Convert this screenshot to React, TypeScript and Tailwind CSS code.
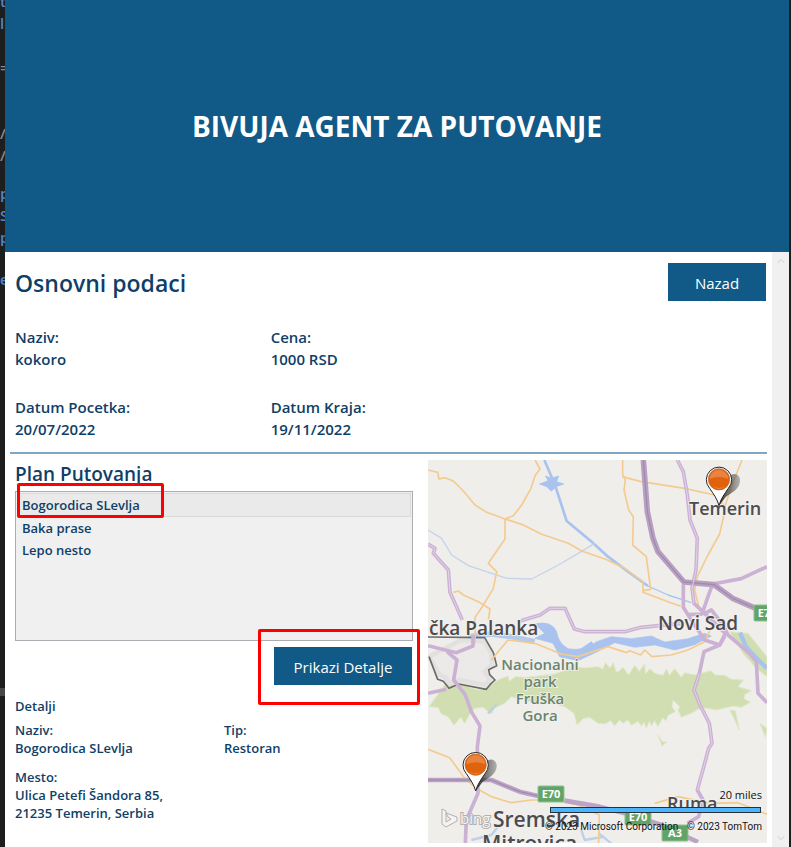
import { ChevronDown, ChevronUp } from "lucide-react";
import { useState } from "react";

const places = ["Bogorodica SLevlja", "Baka prase", "Lepo nesto"];

function Field({ label, value }: { label: string; value: string }) {
  return (
    <div className="px-[10px]">
      <dt>{label}</dt>
      <dd>{value}</dd>
    </div>
  );
}

function ActionButton({ children, className }: { children: string; className: string }) {
  return (
    <button
      type="button"
      className={`h-[38px] bg-[#115a87] pt-[2px] font-['Open_Sans','Noto_Sans',sans-serif] text-[15px] font-normal text-white ${className}`}
    >
      {children}
    </button>
  );
}

function Pin({ x, y }: { x: number; y: number }) {
  return (
    <g transform={`translate(${x} ${y})`}>
      <path d="M0 0C10-30 14-60 30-86C44-104 66-92 63-72C60-48 36-38 20-26Z" fill="url(#shade)" />
      <path
        d="M0 0C-5-20-16-34-28-52A38 38 0 1 1 28-52C16-34 5-20 0 0Z"
        fill="#fff"
        stroke="#222"
        strokeWidth="3"
      />
      <circle cy="-79" r="32" fill="#e0620c" stroke="#c4622a" strokeWidth="2" />
      <path d="M-28-80A28 28 0 0 1 28-80Q0-92-28-80Z" fill="#ea8240" />
      <path d="M-20-60Q0-46 20-60Q0-40-20-60Z" fill="#f08638" />
    </g>
  );
}

function Badge({ x, y, w, label }: { x: number; y: number; w: number; label: string }) {
  return (
    <g>
      <rect x={x} y={y} width={w} height="16" rx="1" fill="#62a468" stroke="#8fc193" />
      <text x={x + w / 2} y={y + 12} textAnchor="middle" fontSize="11" fontWeight="700" fill="#fff">
        {label}
      </text>
    </g>
  );
}

function RouteMap() {
  return (
    <svg
      className="h-[383px] w-full font-['Open_Sans','Noto_Sans',sans-serif] font-normal"
      viewBox="0 0 339 383"
      preserveAspectRatio="xMidYMid slice"
      role="img"
      aria-label="Mapa putovanja"
    >
      <defs>
        <linearGradient id="shade" x1="0" x2="1">
          <stop offset="0" stopColor="#222" stopOpacity="0.95" />
          <stop offset="1" stopColor="#666" stopOpacity="0.45" />
        </linearGradient>
      </defs>
      <rect width="339" height="383" fill="#f0eeeb" />
      <g transform="scale(0.33333)" fill="none" strokeLinejoin="round">
        {/* Fruška Gora forest */}
        <g fill="#d0deb1" stroke="#dee8c8" strokeWidth="3">
          <path d="M3 740L25 710L55 668L80 675L102 670L120 680L150 690L180 682L210 660L240 648L244 664L262 650L290 652L330 648L380 642L420 628L440 608L450 622L470 624L510 620L525 628L532 608L546 624L556 608L564 634L570 636L585 622L602 645L620 616L634 634L650 612L652 642L666 626L680 640L705 646L716 626L724 646L740 626L760 652L770 638L800 645L820 640L848 632L862 645L890 646L910 658L946 660L930 680L970 692L950 704L948 716L968 726L940 742L916 738L890 744L866 750L834 744L810 748L790 760L760 772L750 750L756 740L735 720L732 740L742 755L720 766L714 782L704 774L690 800L680 782L670 798L664 784L655 804L648 786L640 798L630 784L610 796L600 780L585 790L575 780L560 798L548 782L530 792L510 790L485 772L465 776L447 794L438 760L410 740L370 730L330 734L290 720L250 710L230 730L200 744L190 762L165 742L140 745L124 765L110 790L98 772L78 796L60 770L40 762L30 742Z" />
          <path d="M906 750L934 810L928 780L922 752ZM690 825L702 858L716 846L704 846ZM996 790L1012 832L1017 805Z" />
          <path d="M905 515L960 520L1017 590V650L985 625L945 580Z" />
        </g>
        {/* Danube and canals */}
        <g stroke="#a9c3ee">
          <path strokeWidth="8" d="M349 0L381 75L416 183L491 245L540 290L600 335L660 378" />
          <path strokeWidth="4" d="M660 378L720 405L790 428" />
          <path strokeWidth="4" stroke="#c4d3ea" d="M0 210L41 235L71 285L121 317L191 340L236 355L311 357L391 315L451 280L500 250" />
          <path fill="#a9c3ee" strokeWidth="2" d="M334 72L360 62L352 48L371 54L392 48L386 65L408 72L384 80L370 94L356 80Z" />
          <path strokeWidth="16" d="M120 530L190 522L250 530L320 545" stroke="#b4cae9" />
          <path fill="#a9c3ee" strokeWidth="2" d="M320 492Q370 480 386 515Q390 548 420 566Q470 575 506 545L550 530L610 536L670 528L710 546L780 536L830 520L850 528L800 554L740 570L680 555L620 562L560 548L508 575L450 602L395 590L376 550L320 535L350 520Z" />
          <path strokeWidth="15" d="M380 545L405 586L450 580L495 550" />
          <path strokeWidth="13" d="M936 518L954 560L985 594L1017 625" />
          <path strokeWidth="7" d="M206 734L180 760M130 1140L190 1125L210 1100M460 1110L470 1140L530 1130M512 1120L550 1150" stroke="#bdd0ea" />
        </g>
        {/* Town outlines */}
        <path fill="#eceae8" strokeWidth="14" stroke="#e2e1df" d="M3 590L100 540L170 545L190 580L192 614L170 635L186 660L170 675L95 660L62 672L56 655L35 645Z" />
        <path stroke="#6b6b6b" strokeWidth="5" d="M0 531L170 533L196 578L206 617L182 629L185 644L201 660L186 674L175 688L92 672L63 685L46 664L29 658L3 590" />
        {/* Local roads */}
        <g stroke="#f3cb90" strokeWidth="5">
          <path d="M0 30L29 37L33 57L51 53L76 63L106 93L141 135L176 157L231 177L281 193L341 223L421 250L461 273L531 297L590 325L645 365L645 397L720 425L758 439" />
          <path d="M321 0L336 27L321 47L309 85L281 135L256 167L231 177V237L181 310L206 335L196 385L166 435L141 473V550" />
          <path d="M76 397L91 393L106 405L151 425L186 447L181 480" />
          <path d="M584 0V42L592 60L588 90L602 150L616 170L614 255L655 290L668 388L645 392" />
          <path d="M582 50L640 65L770 85L860 105L880 125L892 145L875 222L840 285L808 350L800 390L812 440L830 465" />
          <path d="M942 0L910 80L890 142" />
          <path d="M190 600L240 540L320 550L400 582L450 590L540 560L595 578L605 572L638 585L650 570L672 590L730 585L780 570L830 545L860 480" />
          <path d="M0 868L65 893L110 955L145 985L190 1010L250 1028L310 1020L380 1020L450 1035L514 1065L512 1150" />
          <path d="M680 1030L750 1010L850 1030L930 1028L1017 1063" />
        </g>
        {/* Main roads */}
        <g stroke="#cbb1d4" strokeWidth="11">
          <path d="M0 252L21 265L16 280L61 330L66 397L103 480" />
          <path d="M276 483L336 465L366 445H411L439 507L471 515H590L640 502L760 490" />
          <path d="M748 0L766 35L778 105L786 180L808 235L804 330L792 385L798 430L830 460L850 450L885 495L900 525L962 578L985 605L990 700L1017 728" />
          <path d="M766 373V442L780 464L822 462L840 410L854 372L940 356L1017 320" />
          <path d="M890 530L875 555L828 575L814 640L798 690L816 735L844 790L852 850L842 865L826 925L808 990L825 1020L812 1070L778 1090" />
          <path d="M57 575L87 600L77 660L112 705L130 755L156 798L148 860L150 1000L115 1080L112 1149" />
          <path d="M0 700L55 688M0 557L85 578L135 558V525" />
          <path d="M780 464L830 540L875 555L892 520L830 460" />
          <path d="M0 960H190L275 995L340 1010M410 1022L514 1040L600 1062L700 1095L810 1146" strokeWidth="14" stroke="#bda4c7" />
          <path d="M646 0L658 155L675 235L690 275L768 366L858 374L914 415L985 446" strokeWidth="17" stroke="#b9a0c3" />
          <path d="M646 0L658 155L675 235L690 275L768 366L858 374L914 415L985 446M0 960H190L275 995L340 1010" strokeWidth="4" stroke="#9f8cac" />
        </g>
        <g stroke="#e3d3e8" strokeWidth="3">
          <path d="M0 252L21 265L16 280L61 330L66 397L103 480M276 483L336 465L366 445H411L439 507L471 515H590L640 502L760 490" />
          <path d="M748 0L766 35L778 105L786 180L808 235L804 330L792 385L798 430" />
          <path d="M814 640L798 690L816 735L844 790L852 850L842 865L826 925L808 990" />
        </g>
      </g>
      <g fill="#4c4c4e" stroke="#f3f1ef" strokeWidth="2" strokeOpacity="0.8" paintOrder="stroke" fontWeight="600" fontSize="19">
        <text x="1" y="175">čka Palanka</text>
        <text x="261" y="55" fontSize="18">Temerin</text>
        <text x="230" y="170">Novi Sad</text>
        <text x="65" y="367" fontSize="21">Sremska</text>
        <text x="54" y="391" fontSize="21">Mitrovica</text>
        <text x="239" y="350" fontSize="18">Ruma</text>
        <g fontSize="15" fill="#68856f" textAnchor="middle">
          <text x="112" y="210">Nacionalni</text>
          <text x="112" y="227">park</text>
          <text x="112" y="244">Fruška</text>
          <text x="112" y="261">Gora</text>
        </g>
      </g>
      <Badge x={326} y={145} w={26} label="E75" />
      <Badge x={110} y={326} w={26} label="E70" />
      <Badge x={197} y={349} w={26} label="E70" />
      <Badge x={234} y={365} w={26} label="A3" />
      <g transform="scale(0.33333)">
        <Pin x={873} y={137} />
        <Pin x={143} y={993} />
      </g>
      <g fill="#f4f3f1" stroke="#b3b1b0" strokeWidth="1">
        <path d="M14 349L18 351V362L23 359L20 357L18 353L29 357V361L18 367L14 364Z" />
        <text x="32" y="364" fontSize="15" fontWeight="400" paintOrder="stroke" strokeWidth="2">
          bing
        </text>
      </g>
      <rect x="122.5" y="347.5" width="210" height="5" fill="#4cb4fa" stroke="#26323b" />
      <g fill="#111">
        <text x="334" y="339" textAnchor="end" fontSize="11">20 miles</text>
        <g className="font-[Roboto,sans-serif]" fontSize="10">
          <text x="117" y="370">© 2023 Microsoft Corporation</text>
          <text x="334" y="370" textAnchor="end">© 2023 TomTom</text>
        </g>
      </g>
    </svg>
  );
}

function EditorEdge() {
  return (
    <div
      aria-hidden="true"
      className="flex w-[5px] shrink-0 flex-col overflow-hidden bg-[#1e1e1e] font-['Open_Sans',sans-serif] text-[15px] leading-[22px] text-[#4f86c6]"
    >
      <span className="-mt-[10px]">t</span>
      <span>l</span>
      <span className="mt-[22px] text-[#8a8a8a]">=</span>
      <span className="mt-[44px] text-[#8a8a8a]">/</span>
      <span className="text-[#8a8a8a]">/</span>
      <span className="mt-[16px]">p</span>
      <span>S</span>
      <span>p</span>
      <span className="mt-[20px]">e</span>
      <span className="mt-[398px] h-[8px] bg-[#484848]" />
    </div>
  );
}

export default function App() {
  const [selected, setSelected] = useState(0);

  return (
    <div className="flex min-h-screen bg-[#1e1e1e] font-['Open_Sans','Noto_Sans',sans-serif] font-semibold text-[#0f3f68]">
      <EditorEdge />
      <div className="flex min-w-0 flex-1 flex-col bg-white">
        <header className="flex h-[252px] items-center justify-center bg-[#115a87]">
          <h1 className="text-[28px] font-bold text-white">BIVUJA AGENT ZA PUTOVANJE</h1>
        </header>
        <div className="flex flex-1">
          <main className="min-w-0 flex-1">
            <div className="flex items-center justify-between pt-[11px] pr-[6px] pl-[10px]">
              <h2 className="pt-[2px] text-[23px] leading-8">Osnovni podaci</h2>
              <ActionButton className="w-[98px]">Nazad</ActionButton>
            </div>
            <dl className="mt-[25px] grid grid-cols-3 gap-y-[26px] text-[15px] leading-[22px]">
              <Field label="Naziv:" value="kokoro" />
              <Field label="Cena:" value="1000 RSD" />
              <div />
              <Field label="Datum Pocetka:" value="20/07/2022" />
              <Field label="Datum Kraja:" value="19/11/2022" />
            </dl>
            <hr className="mx-[5px] mt-[12px] border-t-2 border-[#7fa6c2]" />
            <div className="mx-[5px] mt-[6px] grid grid-cols-[418fr_339fr]">
              <section>
                <h3 className="h-[31px] pl-[5px] text-[19px] leading-[28px]">Plan Putovanja</h3>
                <ul className="mr-[15px] ml-[5px] h-[150px] border border-[#abadb3] bg-[#f0f0f0] p-px text-[13px]">
                  {places.map((place, i) => (
                    <li key={place} className="relative">
                      <button
                        type="button"
                        onClick={() => setSelected(i)}
                        className={`block w-full border px-[4px] text-left ${
                          selected === i
                            ? "h-[24px] border-[#dadada] bg-[#eaeaea] leading-[22px]"
                            : "h-[22px] border-transparent leading-[20px]"
                        }`}
                      >
                        {place}
                      </button>
                      {i === 0 && (
                        <span className="pointer-events-none absolute -top-[10px] left-0 h-[35px] w-[147px] rounded-[2px] border-3 border-[#ff0000]" />
                      )}
                    </li>
                  ))}
                </ul>
                <div className="flex justify-end pt-[6px] pr-[16px]">
                  <div className="relative">
                    <ActionButton className="w-[138px]">Prikazi Detalje</ActionButton>
                    <span className="pointer-events-none absolute -top-[18px] -right-[8px] h-[76px] w-[162px] rounded-[2px] border-3 border-[#ff0000]" />
                  </div>
                </div>
                <div className="mr-[5px] -ml-[5px] text-[13px] leading-[18px]">
                  <h4 className="mt-[12px] px-[10px]">Detalji</h4>
                  <dl className="mt-[6px] grid grid-cols-2 gap-y-[11px]">
                    <Field label="Naziv:" value="Bogorodica SLevlja" />
                    <Field label="Tip:" value="Restoran" />
                    <div className="px-[10px]">
                      <dt>Mesto:</dt>
                      <dd>
                        Ulica Petefi Šandora 85,
                        <br />
                        21235 Temerin, Serbia
                      </dd>
                    </div>
                  </dl>
                </div>
              </section>
              <RouteMap />
            </div>
          </main>
          <div className="flex w-[17px] shrink-0 flex-col justify-between bg-[#f0f0f0] text-[#cdcdcd]">
            <button type="button" aria-label="Pomeri gore" className="flex h-[18px] items-center justify-center">
              <ChevronUp size={12} />
            </button>
            <button type="button" aria-label="Pomeri dole" className="flex h-[18px] items-center justify-center">
              <ChevronDown size={12} />
            </button>
          </div>
        </div>
      </div>
      <div className="w-[2px] shrink-0 bg-[#1e1e1e]" />
    </div>
  );
}
